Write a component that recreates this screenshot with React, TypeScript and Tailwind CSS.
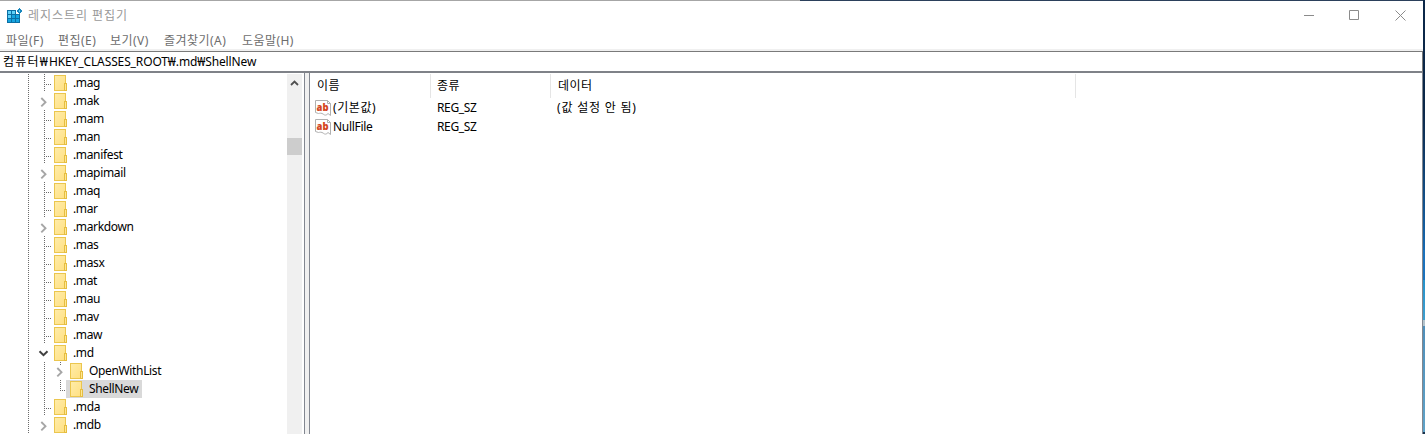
import React from "react";

const NAMES: [string, string][] = [
  [".mag", "leaf"],
  [".mak", "closed"],
  [".mam", "leaf"],
  [".man", "leaf"],
  [".manifest", "leaf"],
  [".mapimail", "closed"],
  [".maq", "leaf"],
  [".mar", "leaf"],
  [".markdown", "closed"],
  [".mas", "leaf"],
  [".masx", "leaf"],
  [".mat", "leaf"],
  [".mau", "leaf"],
  [".mav", "leaf"],
  [".maw", "leaf"],
  [".md", "open"],
  ["OpenWithList", "child"],
  ["ShellNew", "selected"],
  [".mda", "leaf"],
  [".mdb", "closed"],
];

const Folder = () => (
  <svg width="13" height="16" viewBox="0 0 13 16" className="mr-[3px] shrink-0" shapeRendering="crispEdges">
    <defs>
      <linearGradient id="paper" x1="0" y1="0" x2="1" y2="1">
        <stop offset="0" stopColor="#ffeca8" />
        <stop offset="1" stopColor="#ffe083" />
      </linearGradient>
    </defs>
    <rect x="0" y="0" width="12" height="16" fill="#ebc64e" />
    <rect x="1" y="1" width="10" height="14" fill="url(#paper)" />
    <rect x="10" y="8" width="3" height="8" fill="#e6bd40" />
    <rect x="11" y="9" width="1" height="6" fill="#ffe793" />
  </svg>
);

const Branch = ({ kind }: { kind: string }) => (
  <svg width="70" height="18" viewBox="0 0 70 18" className="shrink-0" fill="none">
    <g stroke="#6b6b6b" strokeDasharray="1 1">
      <path d="M28.5 0V18" />
      {(kind === "leaf" || kind === "child" || kind === "selected") && <path d="M44.5 0V18" />}
      {kind === "leaf" && <path d="M46 10.5H51" />}
      {kind === "child" && <path d="M60.5 0V3" />}
      {kind === "selected" && <path d="M60.5 0V10M60 10.5H67" />}
    </g>
    {kind === "closed" && <path d="M41.3 6L45.5 10.2L41.3 14.4" stroke="#a6a6a6" strokeWidth="1.9" />}
    {kind === "open" && <path d="M39.5 7.2L43.5 11.2L47.5 7.2" stroke="#404040" strokeWidth="2" />}
    {kind === "child" && <path d="M57.3 6L61.5 10.2L57.3 14.4" stroke="#a6a6a6" strokeWidth="1.9" />}
  </svg>
);

const TreeRow = ({ name, kind }: { name: string; kind: string }) => {
  const nested = kind === "child" || kind === "selected";
  return (
    <div className="flex h-[18px] items-center">
      <div className={nested ? "w-[66px] shrink-0 overflow-hidden" : "w-[54px] shrink-0 overflow-hidden"}>
        <Branch kind={kind} />
      </div>
      <div
        className={
          (nested ? "pl-[4px] " : "") + (kind === "selected" ? "bg-[#d9d9d9] " : "") + "flex h-[18px] items-center pr-[4px]"
        }
      >
        <Folder />
        <span className="ml-[3px] leading-[18px] tracking-[-0.35px]">{name}</span>
      </div>
    </div>
  );
};

const StringIcon = () => (
  <svg width="16" height="16" viewBox="0 0 16 16" className="shrink-0">
    <path
      d="M.5 .5H12.5L15.5 3.5V15.5L13 13.5C11.5 15.5 9.8 15.5 8.3 14.2C6.5 12.8 5 13.2 3.5 13.5L.5 12.5Z"
      fill="#fff"
      stroke="#b0b0b0"
    />
    <path d="M12.5 .5V3.5H15.5" fill="none" stroke="#b0b0b0" />
    <text x="1.5" y="10.5" textLength="12" lengthAdjust="spacingAndGlyphs" className="fill-[#d4471f] font-['Open_Sans',sans-serif] text-[10px] font-extrabold">
      ab
    </text>
  </svg>
);

export default function App() {
  return (
    <div className="flex h-[434px] w-[1425px] overflow-hidden bg-white font-['Noto_Sans','Noto_Sans_CJK_KR',sans-serif] text-[12px] text-black">
      <div className="flex w-[1423px] flex-col">
        <div className="flex h-px shrink-0">
          <div className="w-[800px] bg-[#a6a6a6]" />
          <div className="flex-1 bg-[#2b405b]" />
        </div>
        <header className="flex h-[29px] shrink-0 items-center pl-[7px] text-[#999999]">
          <svg width="16" height="16" viewBox="0 0 16 16" shapeRendering="crispEdges">
            <rect x="0" y="2" width="13" height="13" fill="#0b6fa4" />
            <path d="M1 3h3v3H1zM5 3h3v3H5zM1 7h3v3H1z" fill="#5fd0f7" />
            <path d="M5 7h3v3H5zM9 7h3v3H9zM1 11h3v3H1zM5 11h3v3H5zM9 11h3v3H9z" fill="#16a5e0" />
            <path d="M9 0h7v6H9z" fill="#fff" />
            <path d="M12.5 0L15.5 3L12.5 6L9.5 3Z" fill="#1787bd" />
            <path d="M12 2h1v2h-1z" fill="#5fd0f7" />
          </svg>
          <span className="ml-[5px] tracking-[0.95px]">레지스트리 편집기</span>
          <svg className="mr-[17px] ml-auto" width="102" height="11" viewBox="0 0 102 11" fill="none" stroke="#8b8b8b">
            <path d="M0 5.5H10M45.5 .5H54.5V9.5H45.5ZM91.5 .5L101.5 10.5M101.5 .5L91.5 10.5" />
          </svg>
        </header>
        <nav className="flex h-[19px] shrink-0 items-center pt-[2px] pl-[6px] tracking-[0.45px] text-[#6d6d6d]">
          <span className="w-[52px]">파일(F)</span>
          <span className="w-[52px]">편집(E)</span>
          <span className="w-[54px]">보기(V)</span>
          <span className="w-[78px]">즐겨찾기(A)</span>
          <span>도움말(H)</span>
        </nav>
        <div className="h-[2px] shrink-0 bg-[#f0f0f0]" />
        <div className="flex h-[20px] shrink-0 items-center border-t border-r border-[#7a7a7a] pl-[3px]">
          <span className="tracking-[1.2px]">컴퓨터₩</span>
          <span className="tracking-[-0.12px]">HKEY_CLASSES_ROOT₩.md₩ShellNew</span>
        </div>
        <div className="h-[2px] shrink-0 bg-[#7f8288]" />
        <main className="flex flex-1">
          <section className="flex w-[304px] pt-px">
            <div className="w-[287px]">
              {NAMES.map(([name, kind]) => (
                <TreeRow key={name} name={name} kind={kind} />
              ))}
            </div>
            <div className="flex w-[15px] flex-col items-center bg-[#f0f0f0]">
              <svg width="15" height="64" viewBox="0 0 15 64" fill="none">
                <path d="M4 11L7.5 7.5L11 11" stroke="#505050" strokeWidth="1.8" />
              </svg>
              <div className="h-[17px] w-full bg-[#cdcdcd]" />
            </div>
          </section>
          <div className="w-[6px] border-x border-[#828790] bg-[#f0f0f0]" />
          <section className="flex-1 border-r border-[#828790] pt-px">
            <div className="flex h-[24px] leading-[24px]">
              <div className="w-[121px] border-r border-[#e5e5e5] pl-[7px] tracking-[0.4px]">이름</div>
              <div className="w-[120px] border-r border-[#e5e5e5] pl-[6px] tracking-[0.4px]">종류</div>
              <div className="w-[525px] border-r border-[#e5e5e5] pl-[7px] tracking-[0.4px]">데이터</div>
            </div>
            {[["(기본값)", "(값 설정 안 됨)"], ["NullFile", ""]].map(([name, data]) => (
              <div key={name} className="flex h-[19px] items-center pl-[5px]">
                <StringIcon />
                <span className={data ? "ml-[2px] w-[104px] tracking-[0.6px]" : "ml-[2px] w-[104px] tracking-[-0.3px]"}>{name}</span>
                <span className="w-[120px] tracking-[-0.35px]">REG_SZ</span>
                <span className="tracking-[0.8px]">{data}</span>
              </div>
            ))}
          </section>
        </main>
      </div>
      <div className="flex w-[2px] flex-col">
        <div className="h-[110px] bg-[#0b2748]" />
        <div className="h-[140px] bg-linear-to-b from-[#0b2748] to-[#1468b0]" />
        <div className="h-[30px] bg-[#1a72bd]" />
        <div className="h-[40px] bg-linear-to-b from-[#2492cb] to-[#3d9fcf]" />
        <div className="h-[6px] bg-[#b3c3cc]" />
        <div className="h-[106px] bg-linear-to-b from-[#4f8fba] to-[#5fa3c8]" />
        <div className="h-[2px] bg-[#17324d]" />
      </div>
    </div>
  );
}
